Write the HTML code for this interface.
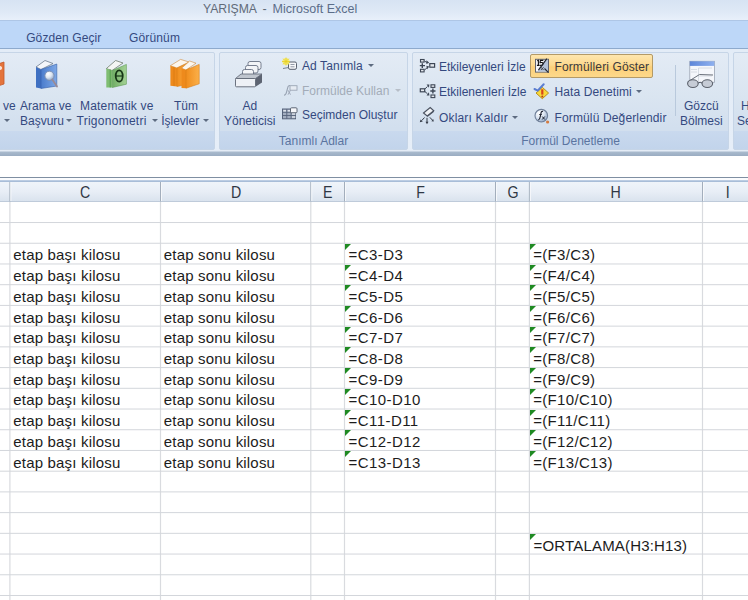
<!DOCTYPE html>
<html><head><meta charset="utf-8">
<style>
*{margin:0;padding:0;box-sizing:border-box}
html,body{width:748px;height:600px;overflow:hidden;background:#fff;font-family:"Liberation Sans",sans-serif}
.a{position:absolute}
#title{left:0;top:0;width:748px;height:20px;background:linear-gradient(#d7e3f3,#dfe9f6 60%,#e8f0fa)}
#tabs{left:0;top:20px;width:748px;height:29px;background:#bdd7f8;border-top:1px solid #aec6e6;border-bottom:1px solid #8eaacd}
#rib{left:0;top:49px;width:748px;height:102px;background:linear-gradient(#e3ecf7,#e6eef8)}
.grp{top:52px;height:98px;border:1px solid #c6d5e7;border-radius:2px;background:linear-gradient(#e3ebf5 0%,#dae5f1 45%,#d2dfee 78%)}
.lab{position:absolute;left:0;right:0;bottom:0;height:18px;background:linear-gradient(#c9d9ee,#c2d4eb);color:#5a74a0;font-size:12px;text-align:center;line-height:21px}
.t{position:absolute;font-size:12px;color:#34497f;white-space:nowrap}
.dis{color:#a3acb8}
.arr{position:absolute;width:0;height:0;border-left:3px solid transparent;border-right:3px solid transparent;border-top:3px solid #5d6b80}
#ribbot{left:0;top:150px;width:748px;height:6px;background:linear-gradient(#e4ecf6 0,#e4ecf6 1px,#a9bacd 2px,#9aacc2 6px)}
#hdr{left:0;top:177px;width:748px;height:26px;border-top:1px solid #7e8ea1;background:linear-gradient(#ffffff 0,#ffffff 2px,#aec2dc 3px,#f2f5fa 4px,#e9eef6 12px,#dbe3ee 24px)}
.hc{position:absolute;top:182px;height:20px;color:#2f3744;font-size:16.5px;text-align:center;line-height:20px;transform:scaleX(0.86)}
.vl{position:absolute;top:203px;width:1px;height:397px;background:#d5dbe5}
.hl{position:absolute;left:0;width:748px;height:1px;background:#d5dbe5}
.hv{position:absolute;top:180px;width:1px;height:22px;background:#9eb0c6}
.c{position:absolute;font-size:15px;color:#1c1c1c;white-space:nowrap;letter-spacing:0.18px}
.tri{position:absolute;width:0;height:0;border-top:6px solid #1f8a22;border-right:6px solid transparent}
</style></head><body>
<div id="title" class="a"></div>
<div class="a" style="left:203px;top:2px;font-size:12.2px;color:#616b79;white-space:nowrap">YARIŞMA</div>
<div class="a" style="left:262.5px;top:2px;font-size:12.5px;color:#616b79;white-space:nowrap">-</div>
<div class="a" style="left:272.5px;top:2px;font-size:12.5px;color:#5b6d89;white-space:nowrap">Microsoft Excel</div>
<div id="tabs" class="a"></div>
<div class="a t" style="left:26.2px;top:31px;letter-spacing:0.1px">Gözden Geçir</div>
<div class="a t" style="left:129px;top:31px;letter-spacing:0.15px">Görünüm</div>
<div id="rib" class="a"></div>

<!-- group 1 -->
<div class="a grp" style="left:-10px;width:225px"><div class="lab"></div></div>
<!-- group 2 -->
<div class="a grp" style="left:219px;width:189px"><div class="lab">Tanımlı Adlar</div></div>
<!-- group 3 -->
<div class="a grp" style="left:412px;width:317px"><div class="lab">Formül Denetleme</div></div>
<!-- group 4 -->
<div class="a grp" style="left:733px;width:40px"><div class="lab"></div></div>

<!-- group1 texts -->
<div class="t" style="left:3px;top:99px">ve</div>
<div class="arr" style="left:4px;top:119px"></div>
<div class="t" style="left:20px;top:99px">Arama ve</div>
<div class="t" style="left:20px;top:114px">Başvuru</div>
<div class="arr" style="left:66px;top:119px"></div>
<div class="t" style="left:80px;top:99px;letter-spacing:0.18px">Matematik ve</div>
<div class="t" style="left:76.5px;top:114px;letter-spacing:0.27px">Trigonometri</div>
<div class="arr" style="left:152px;top:119px"></div>
<div class="t" style="left:174px;top:99px">Tüm</div>
<div class="t" style="left:161.2px;top:114px">İşlevler</div>
<div class="arr" style="left:203px;top:119px"></div>

<!-- group2 texts -->
<div class="t" style="left:242.5px;top:99px">Ad</div>
<div class="t" style="left:224px;top:114px">Yöneticisi</div>
<div class="t" style="left:302px;top:59px;letter-spacing:0.1px">Ad Tanımla</div>
<div class="arr" style="left:368px;top:64px"></div>
<div class="t dis" style="left:302px;top:84px">Formülde Kullan</div>
<div class="arr" style="left:395px;top:89px;border-top-color:#b7bec8"></div>
<div class="t" style="left:302px;top:108px">Seçimden Oluştur</div>

<!-- group3 texts -->
<div class="t" style="left:439px;top:60px">Etkileyenleri İzle</div>
<div class="t" style="left:439px;top:85px">Etkilenenleri İzle</div>
<div class="t" style="left:439px;top:111px;letter-spacing:0.17px">Okları Kaldır</div>
<div class="arr" style="left:512px;top:116px"></div>
<div class="a" style="left:530px;top:54px;width:123px;height:24px;border:1px solid #b49a66;border-radius:2px;background:linear-gradient(#fee6ae,#fdd98f 45%,#fcd07a 55%,#fdd88a)"></div>
<div class="t" style="left:554.5px;top:60px;color:#3b3a3c;letter-spacing:0.12px">Formülleri Göster</div>
<div class="t" style="left:554.5px;top:85px;letter-spacing:0.1px">Hata Denetimi</div>
<div class="arr" style="left:636px;top:90px"></div>
<div class="t" style="left:554.5px;top:111px;letter-spacing:0.14px">Formülü Değerlendir</div>
<div class="a" style="left:675px;top:65px;width:1px;height:51px;background:#b9c9dc"></div>
<div class="t" style="left:684px;top:99px">Gözcü</div>
<div class="t" style="left:680px;top:114px">Bölmesi</div>
<div class="t" style="left:741px;top:99px">H</div>
<div class="t" style="left:737px;top:114px">Se</div>

<svg class="a" style="left:0;top:0" width="748" height="160" viewBox="0 0 748 160">
<defs>
<linearGradient id="gb" x1="0" y1="0" x2="1" y2="0"><stop offset="0" stop-color="#4a7ccc"/><stop offset="1" stop-color="#7ea8e6"/></linearGradient>
<linearGradient id="gg" x1="0" y1="0" x2="1" y2="0"><stop offset="0" stop-color="#6fae63"/><stop offset="1" stop-color="#a5d296"/></linearGradient>
<linearGradient id="go" x1="0" y1="0" x2="1" y2="0"><stop offset="0" stop-color="#f08d1c"/><stop offset="1" stop-color="#fbb04a"/></linearGradient>
<radialGradient id="gl" cx="0.35" cy="0.3" r="0.75"><stop offset="0" stop-color="#ffffff"/><stop offset="0.5" stop-color="#dde6f2"/><stop offset="1" stop-color="#8ea5c6"/></radialGradient>
<linearGradient id="win" x1="0" y1="0" x2="1" y2="0"><stop offset="0" stop-color="#5d86d8"/><stop offset="1" stop-color="#8fb1ef"/></linearGradient>
</defs>
<!-- partial red book -->
<path d="M-2,64 L4,62 L4,84 L-2,86 Z" fill="#e4743c" stroke="#c4582a" stroke-width="0.8"/>
<path d="M0,70 a2,2 0 1 1 0.1,0" fill="#fff" opacity="0.8"/>
<!-- blue book -->
<path d="M36,67 L45,60.5 L53,63.5 L41,69.5 Z" fill="#f4f6fa" stroke="#5c6b80" stroke-width="0.7"/>
<path d="M36,67 L41,69.5 L41,88.5 L36,87.5 Z" fill="#3f70c2"/>
<path d="M41,69.5 L56.8,64 L56.8,86 L41,88.5 Z" fill="url(#gb)" stroke="#3560a8" stroke-width="0.6"/>
<circle cx="49.5" cy="75.8" r="4.6" fill="url(#gl)" stroke="#7c8fb0" stroke-width="0.9"/>
<path d="M52.3,79.5 L57,86.5" stroke="#9a8a95" stroke-width="1.8" stroke-linecap="round"/>
<!-- green book -->
<path d="M106.3,68.6 L115.6,60.5 L123,63 L112,70.5 Z" fill="#f4f6f4" stroke="#5e6d5e" stroke-width="0.7"/>
<path d="M106.3,68.6 L112.3,70.5 L112.3,87.5 L106.3,87.5 Z" fill="#7fbd72"/>
<path d="M112.3,70.5 L126.4,64.4 L126.4,84.2 L112.3,87.5 Z" fill="url(#gg)" stroke="#5d9a52" stroke-width="0.6"/>
<path d="M110.2,69.5 L110.2,87.5" stroke="#4f9a4a" stroke-width="0.9"/>
<ellipse cx="119.2" cy="76" rx="3.5" ry="5.6" fill="none" stroke="#153515" stroke-width="1.8"/>
<path d="M115.8,76 L122.6,76" stroke="#153515" stroke-width="1.2"/>
<!-- orange books -->
<path d="M170.4,65.7 L180.6,59.4 L189,62 L177,68 Z" fill="#fbf6ee" stroke="#d08a3a" stroke-width="0.6"/>
<path d="M170.4,65.7 L177,68 L177,86.5 L170.4,85.7 Z" fill="#ee8a1c"/>
<path d="M177,68 L189,62.5 L189,84 L177,86.5 Z" fill="url(#go)" stroke="#d9801a" stroke-width="0.6"/>
<path d="M174,67 L174,86" stroke="#d67a12" stroke-width="0.8"/>
<path d="M181.5,68.2 L189.7,61 L196,63.2 L186,70 Z" fill="#fbf6ee" stroke="#d08a3a" stroke-width="0.6"/>
<path d="M181.5,68.2 L186,70 L186,88.2 L181.5,88 Z" fill="#ee8a1c"/>
<path d="M186,70 L199.2,64.4 L199.2,83.8 L186,88.2 Z" fill="url(#go)" stroke="#d9801a" stroke-width="0.6"/>
<!-- Ad Yoneticisi: card box -->
<rect x="248" y="61.5" width="13" height="8" rx="2" fill="#f3f5f8" stroke="#6a7384" stroke-width="0.9"/>
<rect x="245.5" y="65.5" width="12.5" height="7.5" rx="2" fill="#f3f5f8" stroke="#6a7384" stroke-width="0.9"/>
<rect x="242.5" y="69.5" width="11" height="7" rx="2" fill="#f3f5f8" stroke="#6a7384" stroke-width="0.9"/>
<path d="M235.5,78.5 L241,74 L262,74 L255.5,78.5 Z" fill="#bfc5ce" stroke="#5d6573" stroke-width="0.8"/>
<path d="M255.5,78.5 L262,74 L262,82.5 L255.5,86.8 Z" fill="#5d6472"/>
<rect x="235.5" y="78.5" width="20" height="8.3" rx="1" fill="#eef1f6" stroke="#5d6573" stroke-width="0.9"/>
<!-- Ad Tanimla -->
<path d="M283,68.5 L288.5,67.5" stroke="#6b7585" stroke-width="0.9"/>
<rect x="288.5" y="62" width="8" height="7.3" rx="1.5" fill="#f6f7fa" stroke="#58606f" stroke-width="1"/>
<path d="M290.5,64.5 H294.5 M290.5,66.8 H294.5" stroke="#7a8292" stroke-width="0.8"/>
<circle cx="286" cy="61.5" r="3.6" fill="#f4ea70" opacity="0.9"/>
<path d="M286,57.5 V65.5 M282,61.5 H290 M283.2,58.7 L288.8,64.3 M288.8,58.7 L283.2,64.3" stroke="#e8cf20" stroke-width="0.8"/>
<g transform="translate(0,1.2)"><!-- fx gray -->
<path d="M284,94 Q286,94 286.8,90 L288,85.5 Q288.6,84 290,84.3" fill="none" stroke="#98a2b2" stroke-width="1.1"/>
<path d="M288,89 L290.5,93.5 M290.5,89 L288,93.5" stroke="#98a2b2" stroke-width="0.9"/>
<rect x="290" y="84.5" width="7" height="4.5" fill="#e6ebf2" stroke="#9ba5b4" stroke-width="0.9"/>
</g>
<!-- Secimden olustur table -->
<rect x="282.5" y="109" width="13" height="9.8" fill="#a3aec0" stroke="#56637a" stroke-width="1"/>
<path d="M283.3,110.8 H286 M287.5,110.8 H290" stroke="#f4f6fa" stroke-width="1.2"/>
<path d="M282.5,112.3 H295.5 M282.5,115.5 H295.5 M286.8,109 V118.8 M291.1,109 V118.8" stroke="#56637a" stroke-width="0.9"/>
<rect x="290.5" y="107.8" width="6.5" height="5" rx="1" fill="#f6f7fa" stroke="#4f5868" stroke-width="0.9"/>
<path d="M292,114 H295.5 M292,117 H295.5" stroke="#f4f6fa" stroke-width="1"/>
<!-- trace precedents -->
<g stroke="#3e4756" fill="#3e4756">
<rect x="420.5" y="59.5" width="3.6" height="2.6" fill="#e4e8ee" stroke-width="1.1"/>
<rect x="420.5" y="69.3" width="3.6" height="2.6" fill="#e4e8ee" stroke-width="1.1"/>
<path d="M419.8,65.6 H425 M422.3,63.2 V68" stroke-width="1.4" fill="none"/>
<path d="M424.5,61.2 L427.5,62.6 M424.5,70 L427.5,67.4" stroke-width="1" fill="none"/>
<path d="M426.5,60.3 L429.2,62.8 L426.3,64 Z M426.3,65.8 L429.2,66.4 L427.2,69.2 Z" stroke="none"/>
<rect x="429.8" y="63.6" width="4.8" height="3.6" fill="#e4e8ee" stroke-width="1.2"/>
</g>
<!-- trace dependents -->
<g stroke="#3e4756" fill="#3e4756">
<rect x="420.3" y="88.8" width="4.4" height="3" fill="#e4e8ee" stroke-width="1.2"/>
<path d="M424.5,89.3 L427.5,86.5 M424.5,91.2 L427.5,93.8" stroke-width="1" fill="none"/>
<path d="M426.6,84.4 L429.4,84.6 L428.9,87.8 Z M426.6,95.6 L429.4,95.4 L428.9,92.2 Z" stroke="none"/>
<rect x="431" y="84.8" width="3.8" height="2.6" fill="#e4e8ee" stroke-width="1.1"/>
<rect x="431" y="95" width="3.8" height="2.6" fill="#e4e8ee" stroke-width="1.1"/>
<path d="M430.3,91 H435.5 M432.9,88.6 V93.4" stroke-width="1.4" fill="none"/>
</g>
<!-- remove arrows -->
<path d="M423.5,113 L430.2,107.5 L433.8,110.8 L427.2,116 Z" fill="#eef1f5" stroke="#4a5260" stroke-width="1.1"/>
<path d="M427.2,116 L433.8,110.8 L433.8,112 L427.5,117 Z" fill="#4a5260"/>
<g stroke="#333a46" fill="#333a46">
<path d="M424.5,117.5 L421.8,120.5 M427,117.8 V122 M429.8,117.3 L432.3,120" stroke-width="1" fill="none"/>
<path d="M419.8,122.2 L420.6,119.6 L422.8,121.6 Z M425.5,121.8 H428.5 L427,124.2 Z M433.8,121.5 L431.4,121.3 L433.2,118.9 Z" stroke="none"/>
</g>
<!-- formulleri goster icon -->
<rect x="535.5" y="59.3" width="13" height="12.8" fill="#f4f5f8" stroke="#60636e" stroke-width="1"/>
<path d="M546.5,59.8 L548,59.8 L548,71.6 L537.5,71.6 Z" fill="#b3c1d6"/>
<path d="M537.2,60.8 L538.4,60.3 L538.4,65.2 M536.9,65.4 H539.6" fill="none" stroke="#111" stroke-width="1.1"/>
<path d="M543.3,60.4 H540.4 L540.1,62.6 Q542.9,62 543,63.8 Q542.9,65.8 539.8,65.3" fill="none" stroke="#111" stroke-width="1.1"/>
<path d="M546.9,58.6 L538.4,70.2" stroke="#22262f" stroke-width="1.2"/>
<path d="M541,67.2 L543.6,70 M543.6,67.2 L541,70" stroke="#333" stroke-width="0.8"/>
<path d="M544.5,68.5 L548.5,72.6" stroke="#22262f" stroke-width="1.1"/>
<!-- hata denetimi -->
<path d="M536,93 L542.3,87.3 L548.6,93 L542.3,98.7 Z" fill="#f8d83a" stroke="#b8901c" stroke-width="1"/>
<path d="M542.3,89.3 V94.6" stroke="#d9441a" stroke-width="2.2"/>
<circle cx="542.3" cy="96.6" r="1" fill="#b83a1a"/>
<path d="M534.5,89 L537.7,90.6 L543.7,84.3" fill="none" stroke="#5a7cd0" stroke-width="2" stroke-linecap="round"/>
<!-- formulu degerlendir -->
<circle cx="541.3" cy="115.7" r="6.3" fill="url(#gl)" stroke="#6f7f98" stroke-width="1.1"/>
<path d="M538.3,120 Q539.8,119.5 540.3,116.5 L541.1,112.6 Q541.6,111 543,111.5" fill="none" stroke="#1e2230" stroke-width="1.2"/>
<path d="M539.2,114.5 H541.8" stroke="#1e2230" stroke-width="0.9"/>
<path d="M542.2,116.5 L544.8,119.5 M544.8,116.5 L542.2,119.5" stroke="#1e2230" stroke-width="1"/>
<circle cx="547.6" cy="122" r="1.6" fill="#d47a40"/>
<!-- gozcu window + glasses -->
<rect x="689.8" y="61.3" width="24.6" height="21" fill="#f5f7fb" stroke="#9aa3b2" stroke-width="0.8"/>
<rect x="689.8" y="61.3" width="24.6" height="4.6" fill="url(#win)"/>
<path d="M691,69.5 H697 M691,72 H697 M698.5,68 V82 M698.5,68 H712 M698.5,76 H712" stroke="#d0d5de" stroke-width="0.8"/>
<path d="M687.5,82 L699.5,74.5 L713,75" fill="none" stroke="#6a707a" stroke-width="1"/>
<ellipse cx="692.9" cy="83.6" rx="5.3" ry="3.9" fill="#c6ccd6" stroke="#5b616b" stroke-width="1.1"/>
<ellipse cx="707.3" cy="83.6" rx="5.3" ry="3.9" fill="#c6ccd6" stroke="#5b616b" stroke-width="1.1"/>
<path d="M698.2,83 Q700.1,81.5 702,83" fill="none" stroke="#5b616b" stroke-width="1"/>
</svg>

<div id="ribbot" class="a"></div>

<div class="a" style="left:0;top:177px;width:748px;height:1px;background:#7f8fa2"></div>
<div class="a" style="left:0;top:178px;width:748px;height:2px;background:#fbfcfe"></div>
<div class="a" style="left:0;top:180px;width:748px;height:1px;background:#bccde3"></div>
<div class="a" style="left:0;top:181px;width:748px;height:1px;background:#a8bdd8"></div>
<div class="a" style="left:0;top:182px;width:748px;height:19px;background:linear-gradient(#eff4fa,#e8eef6 50%,#dae3ee)"></div>
<div class="a" style="left:0;top:201px;width:748px;height:1px;background:#bfcbda"></div>
<svg class="a" style="left:0;top:0" width="748" height="600" viewBox="0 0 748 600">
<line x1="9.9" y1="182" x2="9.9" y2="201.5" stroke="#a3aebc" stroke-width="1"/>
<line x1="10.9" y1="182" x2="10.9" y2="201" stroke="#f6f8fb" stroke-width="1"/>
<line x1="9.9" y1="202" x2="9.9" y2="600" stroke="#d9dbdf" stroke-width="1.2"/>
<line x1="160.5" y1="182" x2="160.5" y2="201.5" stroke="#a3aebc" stroke-width="1"/>
<line x1="161.5" y1="182" x2="161.5" y2="201" stroke="#f6f8fb" stroke-width="1"/>
<line x1="160.5" y1="202" x2="160.5" y2="600" stroke="#d9dbdf" stroke-width="1.2"/>
<line x1="310.8" y1="182" x2="310.8" y2="201.5" stroke="#a3aebc" stroke-width="1"/>
<line x1="311.8" y1="182" x2="311.8" y2="201" stroke="#f6f8fb" stroke-width="1"/>
<line x1="310.8" y1="202" x2="310.8" y2="600" stroke="#d9dbdf" stroke-width="1.2"/>
<line x1="344.5" y1="182" x2="344.5" y2="201.5" stroke="#a3aebc" stroke-width="1"/>
<line x1="345.5" y1="182" x2="345.5" y2="201" stroke="#f6f8fb" stroke-width="1"/>
<line x1="344.5" y1="202" x2="344.5" y2="600" stroke="#d9dbdf" stroke-width="1.2"/>
<line x1="495.5" y1="182" x2="495.5" y2="201.5" stroke="#a3aebc" stroke-width="1"/>
<line x1="496.5" y1="182" x2="496.5" y2="201" stroke="#f6f8fb" stroke-width="1"/>
<line x1="495.5" y1="202" x2="495.5" y2="600" stroke="#d9dbdf" stroke-width="1.2"/>
<line x1="529.4" y1="182" x2="529.4" y2="201.5" stroke="#a3aebc" stroke-width="1"/>
<line x1="530.4" y1="182" x2="530.4" y2="201" stroke="#f6f8fb" stroke-width="1"/>
<line x1="529.4" y1="202" x2="529.4" y2="600" stroke="#d9dbdf" stroke-width="1.2"/>
<line x1="702.5" y1="182" x2="702.5" y2="201.5" stroke="#a3aebc" stroke-width="1"/>
<line x1="703.5" y1="182" x2="703.5" y2="201" stroke="#f6f8fb" stroke-width="1"/>
<line x1="702.5" y1="202" x2="702.5" y2="600" stroke="#d9dbdf" stroke-width="1.2"/>
<line x1="0" y1="222.54" x2="748" y2="222.54" stroke="#d3d6db" stroke-width="1"/>
<line x1="0" y1="243.26" x2="748" y2="243.26" stroke="#d3d6db" stroke-width="1"/>
<line x1="0" y1="263.98" x2="748" y2="263.98" stroke="#d3d6db" stroke-width="1"/>
<line x1="0" y1="284.70" x2="748" y2="284.70" stroke="#d3d6db" stroke-width="1"/>
<line x1="0" y1="305.42" x2="748" y2="305.42" stroke="#d3d6db" stroke-width="1"/>
<line x1="0" y1="326.14" x2="748" y2="326.14" stroke="#d3d6db" stroke-width="1"/>
<line x1="0" y1="346.86" x2="748" y2="346.86" stroke="#d3d6db" stroke-width="1"/>
<line x1="0" y1="367.58" x2="748" y2="367.58" stroke="#d3d6db" stroke-width="1"/>
<line x1="0" y1="388.30" x2="748" y2="388.30" stroke="#d3d6db" stroke-width="1"/>
<line x1="0" y1="409.02" x2="748" y2="409.02" stroke="#d3d6db" stroke-width="1"/>
<line x1="0" y1="429.74" x2="748" y2="429.74" stroke="#d3d6db" stroke-width="1"/>
<line x1="0" y1="450.46" x2="748" y2="450.46" stroke="#d3d6db" stroke-width="1"/>
<line x1="0" y1="471.18" x2="748" y2="471.18" stroke="#d3d6db" stroke-width="1"/>
<line x1="0" y1="491.90" x2="748" y2="491.90" stroke="#d3d6db" stroke-width="1"/>
<line x1="0" y1="512.62" x2="748" y2="512.62" stroke="#d3d6db" stroke-width="1"/>
<line x1="0" y1="533.34" x2="748" y2="533.34" stroke="#d3d6db" stroke-width="1"/>
<line x1="0" y1="554.06" x2="748" y2="554.06" stroke="#d3d6db" stroke-width="1"/>
<line x1="0" y1="574.78" x2="748" y2="574.78" stroke="#d3d6db" stroke-width="1"/>
<line x1="0" y1="595.50" x2="748" y2="595.50" stroke="#d3d6db" stroke-width="1"/>
</svg>
<div class="hc" style="left:10.0px;width:150.5px">C</div>
<div class="hc" style="left:160.5px;width:150.3px">D</div>
<div class="hc" style="left:310.8px;width:33.7px">E</div>
<div class="hc" style="left:344.5px;width:151.0px">F</div>
<div class="hc" style="left:495.5px;width:33.9px">G</div>
<div class="hc" style="left:529.4px;width:173.1px">H</div>
<div class="hc" style="left:702.5px;width:49.5px">I</div>
<div class="c" style="left:13.3px;top:246.4px">etap başı kilosu</div>
<div class="c" style="left:163.8px;top:246.4px">etap sonu kilosu</div>
<div class="tri" style="left:345px;top:243.8px"></div><div class="c" style="left:348.5px;top:246.4px;letter-spacing:0.45px">=C3-D3</div>
<div class="tri" style="left:530px;top:243.8px"></div><div class="c" style="left:533.2px;top:246.4px;letter-spacing:0.33px">=(F3/C3)</div>
<div class="c" style="left:13.3px;top:267.1px">etap başı kilosu</div>
<div class="c" style="left:163.8px;top:267.1px">etap sonu kilosu</div>
<div class="tri" style="left:345px;top:264.5px"></div><div class="c" style="left:348.5px;top:267.1px;letter-spacing:0.45px">=C4-D4</div>
<div class="tri" style="left:530px;top:264.5px"></div><div class="c" style="left:533.2px;top:267.1px;letter-spacing:0.33px">=(F4/C4)</div>
<div class="c" style="left:13.3px;top:287.8px">etap başı kilosu</div>
<div class="c" style="left:163.8px;top:287.8px">etap sonu kilosu</div>
<div class="tri" style="left:345px;top:285.2px"></div><div class="c" style="left:348.5px;top:287.8px;letter-spacing:0.45px">=C5-D5</div>
<div class="tri" style="left:530px;top:285.2px"></div><div class="c" style="left:533.2px;top:287.8px;letter-spacing:0.33px">=(F5/C5)</div>
<div class="c" style="left:13.3px;top:308.5px">etap başı kilosu</div>
<div class="c" style="left:163.8px;top:308.5px">etap sonu kilosu</div>
<div class="tri" style="left:345px;top:305.9px"></div><div class="c" style="left:348.5px;top:308.5px;letter-spacing:0.45px">=C6-D6</div>
<div class="tri" style="left:530px;top:305.9px"></div><div class="c" style="left:533.2px;top:308.5px;letter-spacing:0.33px">=(F6/C6)</div>
<div class="c" style="left:13.3px;top:329.3px">etap başı kilosu</div>
<div class="c" style="left:163.8px;top:329.3px">etap sonu kilosu</div>
<div class="tri" style="left:345px;top:326.6px"></div><div class="c" style="left:348.5px;top:329.3px;letter-spacing:0.45px">=C7-D7</div>
<div class="tri" style="left:530px;top:326.6px"></div><div class="c" style="left:533.2px;top:329.3px;letter-spacing:0.33px">=(F7/C7)</div>
<div class="c" style="left:13.3px;top:350.0px">etap başı kilosu</div>
<div class="c" style="left:163.8px;top:350.0px">etap sonu kilosu</div>
<div class="tri" style="left:345px;top:347.4px"></div><div class="c" style="left:348.5px;top:350.0px;letter-spacing:0.45px">=C8-D8</div>
<div class="tri" style="left:530px;top:347.4px"></div><div class="c" style="left:533.2px;top:350.0px;letter-spacing:0.33px">=(F8/C8)</div>
<div class="c" style="left:13.3px;top:370.7px">etap başı kilosu</div>
<div class="c" style="left:163.8px;top:370.7px">etap sonu kilosu</div>
<div class="tri" style="left:345px;top:368.1px"></div><div class="c" style="left:348.5px;top:370.7px;letter-spacing:0.45px">=C9-D9</div>
<div class="tri" style="left:530px;top:368.1px"></div><div class="c" style="left:533.2px;top:370.7px;letter-spacing:0.33px">=(F9/C9)</div>
<div class="c" style="left:13.3px;top:391.4px">etap başı kilosu</div>
<div class="c" style="left:163.8px;top:391.4px">etap sonu kilosu</div>
<div class="tri" style="left:345px;top:388.8px"></div><div class="c" style="left:348.5px;top:391.4px;letter-spacing:0.45px">=C10-D10</div>
<div class="tri" style="left:530px;top:388.8px"></div><div class="c" style="left:533.2px;top:391.4px;letter-spacing:0.33px">=(F10/C10)</div>
<div class="c" style="left:13.3px;top:412.1px">etap başı kilosu</div>
<div class="c" style="left:163.8px;top:412.1px">etap sonu kilosu</div>
<div class="tri" style="left:345px;top:409.5px"></div><div class="c" style="left:348.5px;top:412.1px;letter-spacing:0.45px">=C11-D11</div>
<div class="tri" style="left:530px;top:409.5px"></div><div class="c" style="left:533.2px;top:412.1px;letter-spacing:0.33px">=(F11/C11)</div>
<div class="c" style="left:13.3px;top:432.9px">etap başı kilosu</div>
<div class="c" style="left:163.8px;top:432.9px">etap sonu kilosu</div>
<div class="tri" style="left:345px;top:430.2px"></div><div class="c" style="left:348.5px;top:432.9px;letter-spacing:0.45px">=C12-D12</div>
<div class="tri" style="left:530px;top:430.2px"></div><div class="c" style="left:533.2px;top:432.9px;letter-spacing:0.33px">=(F12/C12)</div>
<div class="c" style="left:13.3px;top:453.6px">etap başı kilosu</div>
<div class="c" style="left:163.8px;top:453.6px">etap sonu kilosu</div>
<div class="tri" style="left:345px;top:451.0px"></div><div class="c" style="left:348.5px;top:453.6px;letter-spacing:0.45px">=C13-D13</div>
<div class="tri" style="left:530px;top:451.0px"></div><div class="c" style="left:533.2px;top:453.6px;letter-spacing:0.33px">=(F13/C13)</div>
<div class="tri" style="left:530px;top:533.8px"></div><div class="c" style="left:533.5px;top:536.5px">=ORTALAMA(H3:H13)</div>
</body></html>
